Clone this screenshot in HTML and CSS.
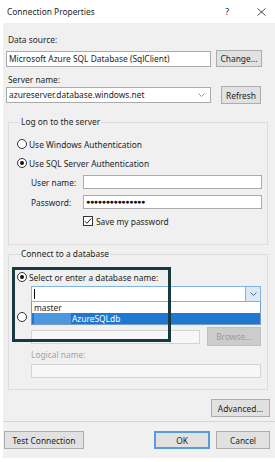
FILE: index.html
```html
<!DOCTYPE html>
<html lang="en">
<head>
    <meta charset="UTF-8">
    <meta name="viewport" content="width=device-width, initial-scale=1.0">
    <title>Connection Properties</title>
    <link rel="stylesheet" href="styles.css">
</head>
<body>
    <div class="dialog">
        <div class="titlebar">
            <span class="title">Connection Properties</span>
            <span class="help">?</span>
            <svg class="close" width="9" height="8" viewBox="0 0 9 8">
                <path d="M0.5 0.5 L8.5 7.5 M8.5 0.5 L0.5 7.5" stroke="#333" stroke-width="0.9" fill="none"/>
            </svg>
        </div>

        <div class="content">
            <div class="label l-source">Data source:</div>
            <div class="row">
                <div class="textbox tb-source">Microsoft Azure SQL Database (SqlClient)</div>
                <div class="btn btn-change">Change...</div>
            </div>

            <div class="label l-server">Server name:</div>
            <div class="row">
                <div class="textbox combo tb-server">
                    <span>azureserver.database.windows.net</span>
                    <svg class="chev" width="7" height="4" viewBox="0 0 7 4">
                        <path d="M0.5 0.5 L3.5 3.5 L6.5 0.5" stroke="#888" stroke-width="0.9" fill="none"/>
                    </svg>
                </div>
                <div class="btn btn-refresh">Refresh</div>
            </div>

            <fieldset class="group g-logon">
                <legend>Log on to the server</legend>
                <div class="radio-row first"><span class="radio"></span>Use Windows Authentication</div>
                <div class="radio-row"><span class="radio on"></span>Use SQL Server Authentication</div>
                <div class="cred-row first">
                    <span class="cred-label">User name:</span>
                    <div class="textbox cred"></div>
                </div>
                <div class="cred-row">
                    <span class="cred-label">Password:</span>
                    <div class="textbox cred pw">&#9679;&#9679;&#9679;&#9679;&#9679;&#9679;&#9679;&#9679;&#9679;&#9679;&#9679;&#9679;&#9679;&#9679;&#9679;</div>
                </div>
                <div class="check-row">
                    <span class="checkbox">
                        <svg width="10" height="10" viewBox="0 0 10 10">
                            <path d="M2 5.2 L4 7.3 L8.2 2.4" stroke="#222" stroke-width="1" fill="none"/>
                        </svg>
                    </span>
                    Save my password
                </div>
            </fieldset>

            <fieldset class="group g-db">
                <legend>Connect to a database</legend>
                <div class="radio-row first"><span class="radio on"></span>Select or enter a database name:</div>
                <div class="db-combo-wrap">
                    <div class="textbox db-combo">
                        <span class="caret"></span>
                        <span class="db-drop">
                            <svg width="7" height="4" viewBox="0 0 7 4">
                                <path d="M0.5 0.5 L3.5 3.5 L6.5 0.5" stroke="#4a6a8a" stroke-width="1" fill="none"/>
                            </svg>
                        </span>
                    </div>
                    <div class="db-list">
                        <div class="db-item">master</div>
                        <div class="db-item selected"><span class="redacted"></span>AzureSQLdb</div>
                    </div>
                </div>
                <!-- label of this option is hidden under the open list -->
                <div class="radio-row attach"><span class="radio"></span></div>
                <div class="file-row">
                    <div class="textbox disabled file-box"></div>
                    <div class="btn disabled btn-browse">Browse...</div>
                </div>
                <div class="label disabled-text l-logical">Logical name:</div>
                <div class="textbox disabled logical-box"></div>
            </fieldset>

            <div class="adv-row"><div class="btn btn-adv">Advanced...</div></div>
            <div class="separator"></div>
            <div class="footer">
                <div class="btn btn-test">Test Connection</div>
                <div class="btn btn-ok">OK</div>
                <div class="btn btn-cancel">Cancel</div>
            </div>

            <div class="highlight"></div>
        </div>
    </div>
</body>
</html>
```

FILE: styles.css
```css
* {
    margin: 0;
    padding: 0;
    box-sizing: border-box;
}

body {
    background: #fff;
    font-family: 'Noto Sans', 'Open Sans', sans-serif;
    font-size: 8.4px;
    color: #1e1e1e;
}

.dialog {
    width: 275px;
}

/* Title bar */
.titlebar {
    height: 23px;
    display: flex;
    align-items: center;
    background: #fff;
    padding-left: 7px;
}

.title {
    font-size: 8.4px;
    flex: 1;
}

.help {
    font-size: 8.8px;
    margin-right: 28px;
}

.close {
    margin-right: 9px;
}

/* Dialog body */
.content {
    position: relative;
    margin-left: 3px;
    height: 435px;
    background: #f0f0f0;
    padding-top: 11px;
}

.label {
    height: 12px;
    line-height: 12px;
    margin-left: 5px;
}

.l-source { margin-bottom: 4px; }
.l-server { margin-top: 7px; }

.row {
    display: flex;
    align-items: center;
    margin-left: 3px;
}

.textbox {
    background: #fff;
    border: 1px solid #ababab;
    height: 16px;
    line-height: 14px;
    padding-left: 2px;
    white-space: nowrap;
    overflow: hidden;
}

.tb-source { width: 205px; }
.tb-server {
    width: 205px;
    display: flex;
    align-items: center;
    justify-content: space-between;
    padding-right: 5px;
}

.btn {
    background: #e1e1e1;
    border: 1px solid #adadad;
    height: 18px;
    display: flex;
    align-items: center;
    justify-content: center;
    white-space: nowrap;
}

.btn-change { width: 46px; height: 17px; margin-left: 5px; }
.btn-refresh { width: 40px; margin-left: 10px; }

/* Group boxes */
.group {
    border: 1px solid #dcdcdc;
    margin: 0 7px 0 5px;
    min-width: 0;
}

.group legend {
    height: 12px;
    line-height: 12px;
    margin-left: 3px;
    padding: 0 1px;
}

.g-logon {
    margin-top: 12px;
    padding: 10px 0 17px 8px;
}

.g-db {
    margin-top: 3px;
    padding: 11px 0 11px 8px;
}

.radio-row {
    display: flex;
    align-items: center;
    height: 12px;
}

.radio-row + .radio-row { margin-top: 7px; }

.radio {
    width: 10px;
    height: 10px;
    border: 1px solid #333;
    border-radius: 50%;
    background: #fff;
    margin-right: 2px;
    display: flex;
    align-items: center;
    justify-content: center;
}

.radio.on::after {
    content: '';
    width: 4px;
    height: 4px;
    border-radius: 50%;
    background: #111;
}

.cred-row {
    display: flex;
    align-items: center;
    margin-left: 14px;
    margin-top: 6px;
}

.cred-label {
    width: 52px;
}

.textbox.cred {
    width: 179px;
    height: 14px;
    line-height: 12px;
}

.pw {
    font-size: 7px;
    letter-spacing: -0.3px;
    padding-left: 2px;
    color: #111;
}

.check-row {
    display: flex;
    align-items: center;
    height: 12px;
    margin-top: 6px;
    margin-left: 66px;
}

.checkbox {
    width: 10px;
    height: 10px;
    border: 1px solid #333;
    background: #fff;
    margin-right: 3px;
    display: flex;
}

.checkbox svg {
    margin: -1px;
}

/* Database section */
.db-combo-wrap {
    position: relative;
    margin: 3px 0 0 14px;
    width: 230px;
}

.db-combo {
    height: 16px;
    border-color: #7eb4ea;
    display: flex;
    align-items: stretch;
    justify-content: space-between;
    padding-left: 2px;
}

.caret {
    width: 1px;
    margin: 2px 0;
    background: #000;
}

.db-drop {
    width: 15px;
    background: #dbe9f7;
    border-left: 1px solid #7eb4ea;
    display: flex;
    align-items: center;
    justify-content: center;
}

.db-list {
    position: absolute;
    left: 0;
    right: 0;
    top: 16px;
    background: #fff;
    border: 1px solid #7a9cc4;
    border-top: none;
    z-index: 2;
}

.db-item {
    height: 11px;
    line-height: 11px;
    padding-left: 2px;
    display: flex;
}

.db-item.selected {
    background: #1e78d2;
    color: #fff;
}

.redacted {
    width: 37px;
    margin-right: 1px;
    background: #4c97dd;
}

.radio-row.attach {
    margin-top: 9px;
}

.file-row {
    display: flex;
    align-items: center;
    margin: 4px 0 0 14px;
}

.textbox.disabled {
    background: #f7f7f7;
    border-color: #d4d4d4;
}

.file-box {
    width: 169px;
    height: 14px;
}

.btn.disabled {
    background: #cccccc;
    border-color: #bfbfbf;
    color: #9a9a9a;
}

.btn-browse {
    width: 54px;
    height: 19px;
    margin-left: 7px;
}

.disabled-text {
    color: #a2a2a2;
}

.l-logical {
    margin: 3px 0 0 14px;
}

.logical-box {
    width: 230px;
    height: 14px;
    margin: 3px 0 0 14px;
}

/* Bottom */
.adv-row {
    display: flex;
    justify-content: flex-end;
    margin: 9px 5px 0 0;
}

.btn-adv { width: 59px; }

.separator {
    height: 1px;
    background: #d6d6d6;
    margin-top: 4px;
}

.footer {
    display: flex;
    margin: 9px 5px 0 1px;
}

.btn-test { width: 80px; }
.btn-ok {
    width: 56px;
    margin-left: auto;
    border: 2px solid #5a9be0;
}
.btn-cancel { width: 54px; margin-left: 6px; }

/* Annotation box drawn over the dialog */
.highlight {
    position: absolute;
    left: 9px;
    top: 244px;
    width: 159px;
    height: 75px;
    border: 3px solid #163a40;
    z-index: 3;
}
```
